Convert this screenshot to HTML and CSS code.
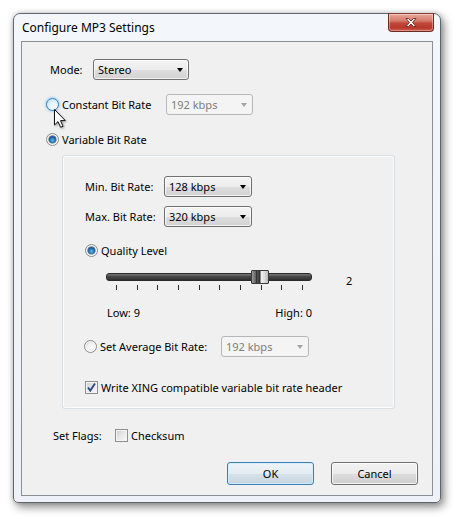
FILE: index.html
```html
<!DOCTYPE html>
<html>
<head>
<meta charset="utf-8">
<title>Configure MP3 Settings</title>
<link rel="stylesheet" href="styles.css">
</head>
<body>
<div class="window">
  <div class="titlebar">
    <span class="title">Configure MP3 Settings</span>
    <div class="close">
      <svg width="14" height="11" viewBox="0 0 14 11"><path d="M2 1.5 L4.5 1.5 L7 4 L9.5 1.5 L12 1.5 L8.5 5.5 L12 9.5 L9.5 9.5 L7 7 L4.5 9.5 L2 9.5 L5.5 5.5 Z" fill="#fff" stroke="#6b2a22" stroke-width="0.9" stroke-linejoin="round"/></svg>
    </div>
  </div>
  <div class="client">
    <div class="row mode-row">
      <span class="lbl mode-lbl">Mode:</span>
      <div class="combo w96"><span>Stereo</span><i class="arrow"></i></div>
    </div>
    <div class="row cbr-row">
      <div class="opt cbr-opt"><span class="rb hover"></span><span>Constant Bit Rate</span></div>
      <div class="combo disabled w87"><span>192 kbps</span><i class="arrow"></i></div>
    </div>
    <div class="row vbr-row">
      <div class="opt"><span class="rb checked"></span><span>Variable Bit Rate</span></div>
    </div>
    <div class="group">
      <div class="row min-row">
        <span class="lbl rate-lbl">Min. Bit Rate:</span>
        <div class="combo w88"><span>128 kbps</span><i class="arrow"></i></div>
      </div>
      <div class="row max-row">
        <span class="lbl rate-lbl">Max. Bit Rate:</span>
        <div class="combo w88"><span>320 kbps</span><i class="arrow"></i></div>
      </div>
      <div class="row quality-row">
        <div class="opt"><span class="rb checked"></span><span>Quality Level</span></div>
      </div>
      <div class="slider-row">
        <div class="slider">
          <div class="track"></div>
          <div class="thumb"><i></i></div>
          <div class="ticks">
            <i></i><i></i><i></i><i></i><i></i><i></i><i></i><i></i><i></i><i></i>
          </div>
        </div>
        <span class="value">2</span>
      </div>
      <div class="row lowhigh-row">
        <span>Low: 9</span>
        <span>High: 0</span>
      </div>
      <div class="row avg-row">
        <div class="opt avg-opt"><span class="rb"></span><span>Set Average Bit Rate:</span></div>
        <div class="combo disabled w88"><span>192 kbps</span><i class="arrow"></i></div>
      </div>
      <div class="row xing-row">
        <div class="opt"><span class="cb checked"><svg width="11" height="11" viewBox="0 0 11 11"><path d="M2 5.5 L4.3 8.5 L9 1.5" fill="none" stroke="#2b4a86" stroke-width="1.9"/></svg></span><span>Write XING compatible variable bit rate header</span></div>
      </div>
    </div>
    <div class="row flags-row">
      <span class="lbl flags-lbl">Set Flags:</span>
      <div class="opt"><span class="cb"></span><span>Checksum</span></div>
    </div>
    <div class="buttons">
      <div class="btn default">OK</div>
      <div class="btn">Cancel</div>
    </div>
  </div>
  <svg class="cursor" width="14" height="21" viewBox="0 0 14 21">
    <path d="M1.5 1.5 L1.5 17 L5 13.6 L7.6 19.3 L10 18.3 L7.5 12.6 L12.3 12.6 Z" fill="#fff" stroke="#111" stroke-width="1" stroke-linejoin="round"/>
  </svg>
</div>
</body>
</html>
```
FILE: styles.css
```css
* { box-sizing: border-box; }
html, body { margin: 0; padding: 0; background: #ffffff; }
body {
  font-family: "Noto Sans", "Open Sans", sans-serif;
  font-size: 11px;
  color: #000;
  width: 457px;
  height: 519px;
  overflow: hidden;
}
.window {
  position: relative;
  margin: 13px 0 0 13px;
  width: 428px;
  height: 490px;
  border: 1px solid #62676d;
  border-radius: 7px 7px 5px 5px;
  background: linear-gradient(#f3f6fa, #eef2f8);
  padding: 0 7px 6px 7px;
  box-shadow: 3px 4px 10px rgba(0,0,0,0.45), 0 0 5px rgba(0,0,0,0.18);
}
.titlebar {
  height: 27px;
  display: flex;
  align-items: flex-start;
  justify-content: space-between;
}
.title {
  font-size: 12px;
  margin-top: 5px;
  margin-left: 1px;
  color: #000;
  text-shadow: 0 0 6px #fff;
}
.close {
  width: 46px;
  height: 19px;
  margin-top: -1px;
  margin-right: -1px;
  border: 1px solid #6d2b23;
  border-top-color: #8a3c32;
  border-radius: 0 0 4px 4px;
  background: linear-gradient(#e9a99b 0%, #d47a6a 40%, #c0473a 55%, #b7392d 80%, #cf5d4b 100%);
  box-shadow: inset 0 0 0 1px rgba(255,255,255,0.35);
  display: flex;
  align-items: center;
  justify-content: center;
}
.close svg { display: block; }
.client {
  height: 455px;
  border: 1px solid #8a8f96;
  background: #f0f0f0;
}
.row {
  display: flex;
  align-items: center;
}
.lbl { display: inline-block; }
.opt {
  display: flex;
  align-items: center;
  gap: 3px;
}
.mode-row { margin-top: 17px; height: 21px; padding-left: 28px; }
.mode-lbl { width: 43px; }
.cbr-row { margin-top: 14px; height: 21px; padding-left: 24px; }
.cbr-opt { width: 120px; }
.vbr-row { margin-top: 16px; height: 16px; padding-left: 24px; }

.combo {
  height: 21px;
  border: 1px solid #707070;
  border-radius: 3px;
  background: linear-gradient(#f4f4f4 0%, #ececec 50%, #dedede 52%, #d2d2d2 100%);
  box-shadow: inset 0 0 0 1px rgba(255,255,255,0.7);
  display: flex;
  align-items: center;
  justify-content: space-between;
  padding: 0 4px 0 4px;
}
.combo span { padding-bottom: 1px; }
.w96 { width: 96px; }
.w87 { width: 87px; }
.w88 { width: 88px; }
.arrow {
  width: 0; height: 0;
  border-left: 3.5px solid transparent;
  border-right: 3.5px solid transparent;
  border-top: 4px solid #000;
  margin-right: 1px;
}
.combo.disabled {
  border-color: #b5b8bb;
  background: #f4f4f4;
  box-shadow: none;
  color: #7d7d7d;
}
.combo.disabled .arrow { border-top-color: #a4a4a4; }

.rb {
  width: 13px; height: 13px;
  border-radius: 50%;
  border: 1px solid #8d8d8d;
  background: radial-gradient(circle at 65% 70%, #ffffff 0%, #f4f4f4 40%, #d2d2d2 100%);
  box-shadow: inset 0 0 0 1px rgba(255,255,255,0.6);
  flex: none;
  position: relative;
}
.rb.checked::after {
  content: "";
  position: absolute;
  left: 2px; top: 2px;
  width: 7px; height: 7px;
  border-radius: 50%;
  background: radial-gradient(circle at 50% 60%, #5fc0f0 0%, #1d6aa6 50%, #0d2f57 100%);
  box-shadow: 0 0 0 0.5px #3a5878;
}
.rb.hover {
  border-color: #3c7fb1;
  background: radial-gradient(circle at 60% 65%, #ffffff 0%, #dff2fc 45%, #aedbf4 100%);
  box-shadow: 0 0 2px 1px rgba(120,190,235,0.6);
}
.cb {
  width: 13px; height: 13px;
  border: 1px solid #8e8f8f;
  background: linear-gradient(135deg, #c9cbcd 0%, #e8e8e9 50%, #f7f7f7 100%);
  box-shadow: inset 0 0 0 1px #f4f4f4;
  flex: none;
  display: flex;
  align-items: center;
  justify-content: center;
}
.cb svg { display: block; }

.group {
  margin-top: 8px;
  margin-left: 40px;
  width: 333px;
  height: 254px;
  border: 1px solid #d5dfe5;
  border-radius: 3px;
  box-shadow: inset 0 0 0 1px #fbfbfb;
}
.min-row { margin-top: 20px; height: 21px; padding-left: 22px; }
.max-row { margin-top: 9px; height: 21px; padding-left: 22px; }
.rate-lbl { width: 79px; }
.quality-row { margin-top: 15px; height: 16px; padding-left: 22px; }

.slider-row {
  margin-top: 12px;
  height: 20px;
  padding-left: 43px;
  display: flex;
  align-items: flex-start;
}
.slider {
  position: relative;
  width: 206px;
  height: 20px;
}
.track {
  margin-top: 3px;
  height: 8px;
  border-radius: 3px;
  background: linear-gradient(#7a7a7a 0%, #4a4a4a 40%, #2f2f2f 100%);
  border: 1px solid #2a2a2a;
}
.thumb {
  position: absolute;
  left: 145px;
  top: 0;
  width: 18px;
  height: 14px;
  border: 1px solid #3a3a3a;
  border-radius: 1px;
  background: linear-gradient(90deg, #9a9a9a 0%, #5d5d5d 25%, #404040 45%, #1e1e1e 50%, #f0f0f0 56%, #dcdcdc 80%, #b9b9b9 100%);
}
.thumb i {
  position: absolute;
  left: 4px; top: 0;
  width: 1px; height: 12px;
  background: #333;
}
.ticks {
  display: flex;
  justify-content: space-between;
  padding: 0 9px 0 10px;
  margin-top: 4px;
}
.ticks i {
  width: 1px;
  height: 5px;
  background: #2b2b2b;
}
.value {
  margin-left: 34px;
  margin-top: 3px;
}
.lowhigh-row {
  margin-top: 15px;
  height: 14px;
  margin-left: 44px;
  width: 205px;
  justify-content: space-between;
}
.avg-row { margin-top: 17px; height: 21px; padding-left: 21px; }
.avg-opt { width: 137px; }
.xing-row { margin-top: 22px; height: 16px; padding-left: 22px; }

.flags-row { margin-top: 18px; height: 16px; padding-left: 31px; }
.flags-lbl { width: 62px; }

.buttons {
  margin-top: 19px;
  display: flex;
  justify-content: flex-end;
  gap: 17px;
  padding-right: 14px;
}
.btn {
  width: 87px;
  height: 23px;
  border: 1px solid #707070;
  border-radius: 3px;
  background: linear-gradient(#f2f2f2 0%, #ebebeb 50%, #dddddd 51%, #cfcfcf 100%);
  box-shadow: inset 0 0 0 1px rgba(255,255,255,0.75);
  display: flex;
  align-items: center;
  justify-content: center;
  padding-bottom: 1px;
}
.btn.default {
  border-color: #3c7fb1;
  background: linear-gradient(#eef4f8 0%, #e4ecf2 50%, #d6e1e9 51%, #c8d6e0 100%);
  box-shadow: inset 0 0 0 1px rgba(210,236,252,0.9);
}
.cursor {
  position: absolute;
  left: 39px;
  top: 94px;
  filter: drop-shadow(1px 1px 1px rgba(0,0,0,0.35));
}
```
